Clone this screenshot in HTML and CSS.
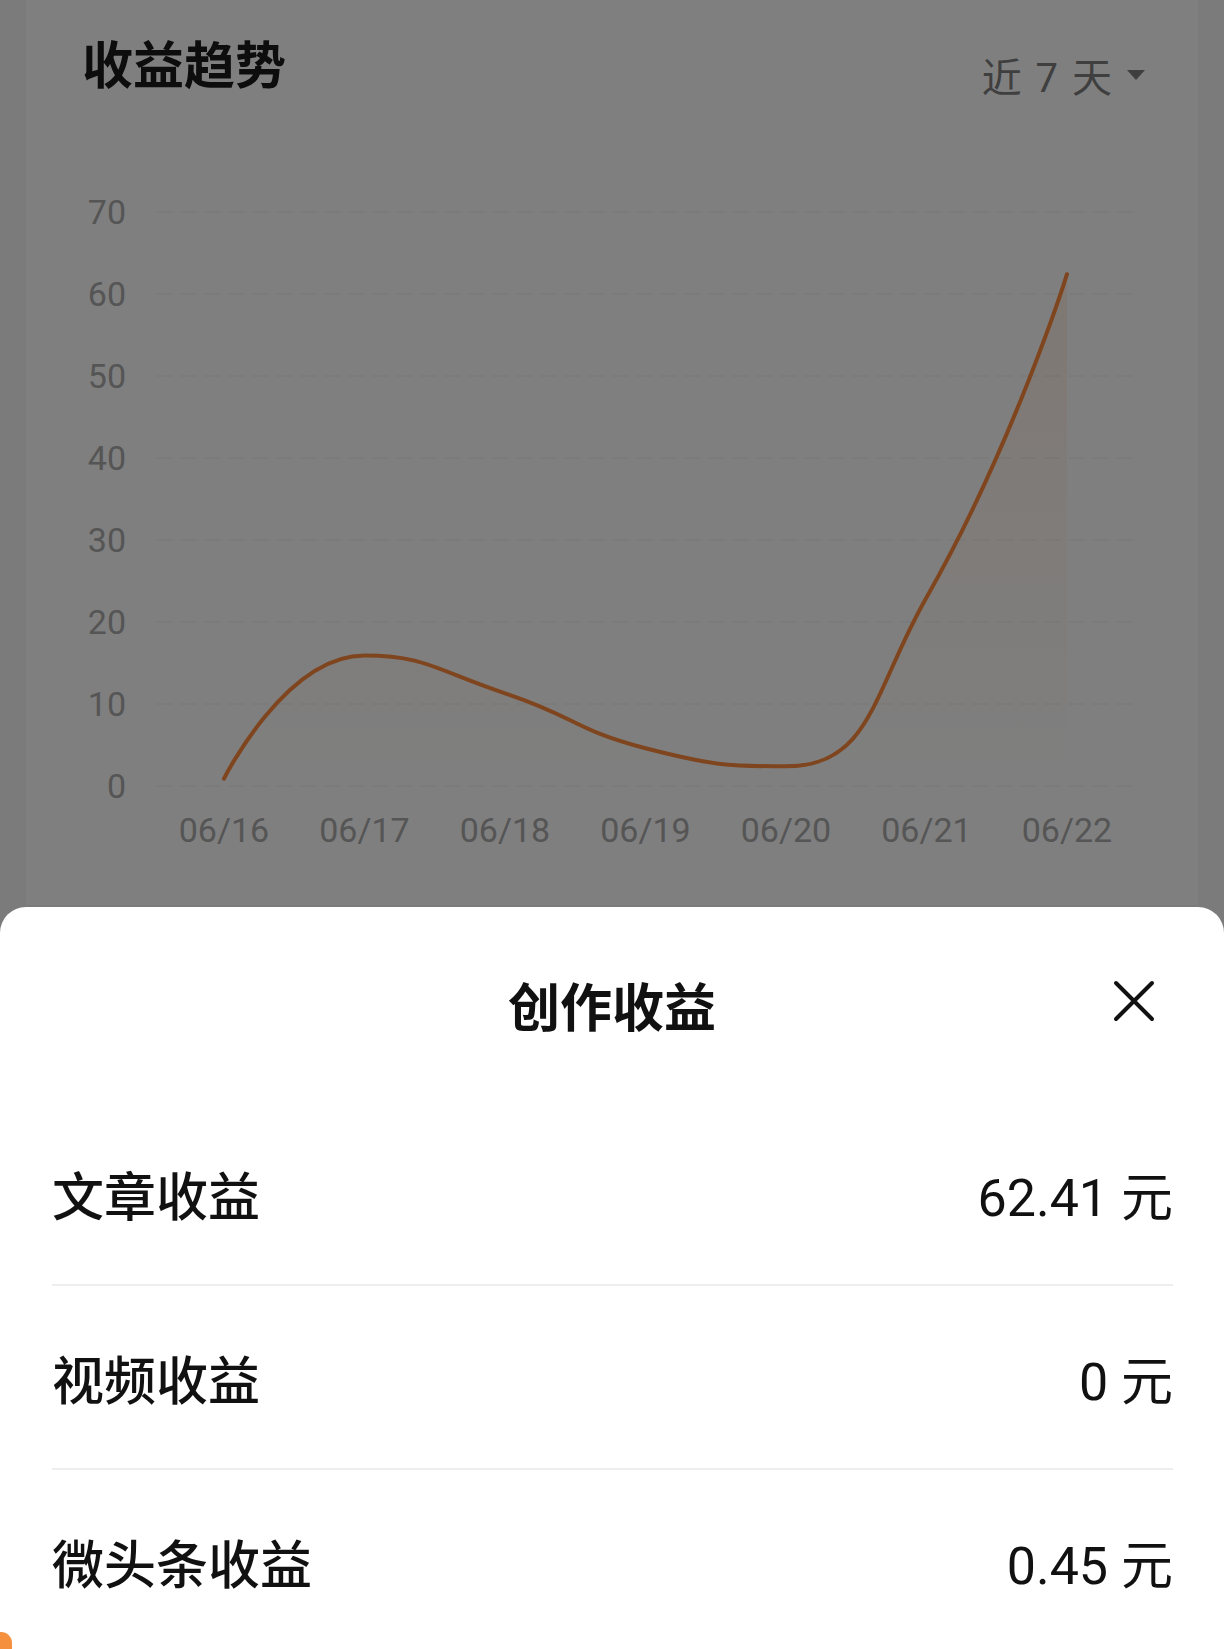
FILE: index.html
```html
<!DOCTYPE html>
<html lang="zh-CN">
<head>
    <meta charset="UTF-8">
    <title>收益趋势</title>
    <link rel="stylesheet" href="styles.css">
</head>
<body>
    <div class="card">
        <div class="card-head">
            <h2 class="card-title">收益趋势</h2>
            <div class="range">
                <span>近 7 天</span>
                <svg class="caret" width="20" height="12" viewBox="0 0 20 12"><path d="M1 1 H19 L10 11 Z" fill="#7e7e7e"/></svg>
            </div>
        </div>
        <svg class="chart" width="1172" height="773" viewBox="26 132 1172 773">
            <defs>
                <linearGradient id="fade" gradientUnits="userSpaceOnUse" x1="0" y1="274" x2="0" y2="786">
                    <stop offset="0" stop-color="#ff8a3c" stop-opacity="0.12"/>
                    <stop offset="1" stop-color="#ff8a3c" stop-opacity="0"/>
                </linearGradient>
            </defs>
            <g class="grid">
                <line x1="157" y1="212" x2="1141" y2="212"/>
                <line x1="157" y1="294" x2="1141" y2="294"/>
                <line x1="157" y1="376" x2="1141" y2="376"/>
                <line x1="157" y1="458" x2="1141" y2="458"/>
                <line x1="157" y1="540" x2="1141" y2="540"/>
                <line x1="157" y1="622" x2="1141" y2="622"/>
                <line x1="157" y1="704" x2="1141" y2="704"/>
                <line x1="157" y1="786" x2="1141" y2="786"/>
            </g>
            <g class="y-labels">
                <text x="126" y="224">70</text>
                <text x="126" y="306">60</text>
                <text x="126" y="388">50</text>
                <text x="126" y="470">40</text>
                <text x="126" y="552">30</text>
                <text x="126" y="634">20</text>
                <text x="126" y="716">10</text>
                <text x="126" y="798">0</text>
            </g>
            <g class="x-labels">
                <text x="224" y="842">06/16</text>
                <text x="364.5" y="842">06/17</text>
                <text x="505" y="842">06/18</text>
                <text x="645.5" y="842">06/19</text>
                <text x="786" y="842">06/20</text>
                <text x="926.5" y="842">06/21</text>
                <text x="1067" y="842">06/22</text>
            </g>
            <path class="area" d="M224,778.6 C224,778.6 285.53,655.6 364.5,655.6 C426.04,655.6 436.03,670.54 505,693.3 C576.53,716.9 573.01,729.47 645.5,748.3 C713.52,765.97 730.93,766.3 786,766.3 C871.44,766.3 872.54,691.89 926.5,597.4 C1013.05,445.83 1067,274.2 1067,274.2 L1067,786 L224,786 Z"/>
            <path class="line" d="M224,778.6 C224,778.6 285.53,655.6 364.5,655.6 C426.04,655.6 436.03,670.54 505,693.3 C576.53,716.9 573.01,729.47 645.5,748.3 C713.52,765.97 730.93,766.3 786,766.3 C871.44,766.3 872.54,691.89 926.5,597.4 C1013.05,445.83 1067,274.2 1067,274.2"/>
        </svg>
    </div>

    <div class="mask"></div>

    <div class="sheet">
        <div class="sheet-head">
            <h3 class="sheet-title">创作收益</h3>
            <button class="close" aria-label="关闭">
                <svg width="42" height="42" viewBox="0 0 42 42"><path d="M3 3 L39 39 M39 3 L3 39" stroke="#111" stroke-width="4" stroke-linecap="round"/></svg>
            </button>
        </div>
        <ul class="income-list">
            <li><span>文章收益</span><span class="amount">62.41 元</span></li>
            <li><span>视频收益</span><span class="amount">0 元</span></li>
            <li><span>微头条收益</span><span class="amount">0.45 元</span></li>
        </ul>
        <div class="edge-tab"></div>
    </div>
</body>
</html>
```

FILE: styles.css
```css
body {
    margin: 0;
    padding: 0;
    background-color: #f6f6f6;
    font-family: Roboto, "Noto Sans CJK SC", sans-serif;
    overflow: hidden;
}

.card {
    margin: 0 26px;
    height: 905px;
    background-color: #fff;
}

.card-head {
    height: 132px;
    padding: 0 52px 0 56px;
    display: flex;
    align-items: center;
    justify-content: space-between;
}

.card-title {
    margin: 0;
    font-size: 51px;
    font-weight: 700;
    color: #1a1a1a;
    line-height: 1;
}

.range {
    display: flex;
    align-items: center;
    gap: 14px;
    font-size: 40px;
    color: #7e7e7e;
    padding-top: 18px;
    word-spacing: 4px;
}

.caret {
    display: block;
}

.chart {
    display: block;
}

.grid line {
    stroke: #f3f3f3;
    stroke-width: 1.5;
    stroke-dasharray: 16 8;
}

.y-labels text {
    font-size: 34px;
    fill: #ababab;
    text-anchor: end;
}

.x-labels text {
    font-size: 34px;
    fill: #ababab;
    text-anchor: middle;
}

.area {
    fill: url(#fade);
}

.line {
    fill: none;
    stroke: #ff8a3c;
    stroke-width: 4;
    stroke-linecap: round;
}

.mask {
    position: fixed;
    top: 0;
    left: 0;
    right: 0;
    bottom: 0;
    background-color: rgba(0, 0, 0, 0.5);
}

.sheet {
    position: fixed;
    left: 0;
    right: 0;
    bottom: 0;
    top: 907px;
    background-color: #fff;
    border-radius: 26px 26px 0 0;
    color: #111;
}

.sheet-head {
    position: relative;
    height: 195px;
    padding-top: 70px;
    box-sizing: border-box;
    text-align: center;
}

.sheet-title {
    margin: 0;
    font-size: 52px;
    font-weight: 600;
    line-height: 66px;
}

.close {
    position: absolute;
    top: 73px;
    right: 69px;
    padding: 0;
    border: none;
    background: none;
    cursor: pointer;
}

.close svg {
    display: block;
}

.income-list {
    list-style: none;
    margin: 0 51px 0 52px;
    padding: 0;
}

.income-list li {
    height: 182px;
    display: flex;
    align-items: center;
    justify-content: space-between;
    font-size: 52px;
    font-weight: 500;
    border-bottom: 2px solid #eeeeee;
}

.income-list li:last-child {
    border-bottom: none;
}

.amount {
    font-weight: 400;
}

.edge-tab {
    position: absolute;
    left: -10px;
    top: 725px;
    width: 22px;
    height: 40px;
    border-radius: 11px;
    background-color: #f5903f;
}
```
